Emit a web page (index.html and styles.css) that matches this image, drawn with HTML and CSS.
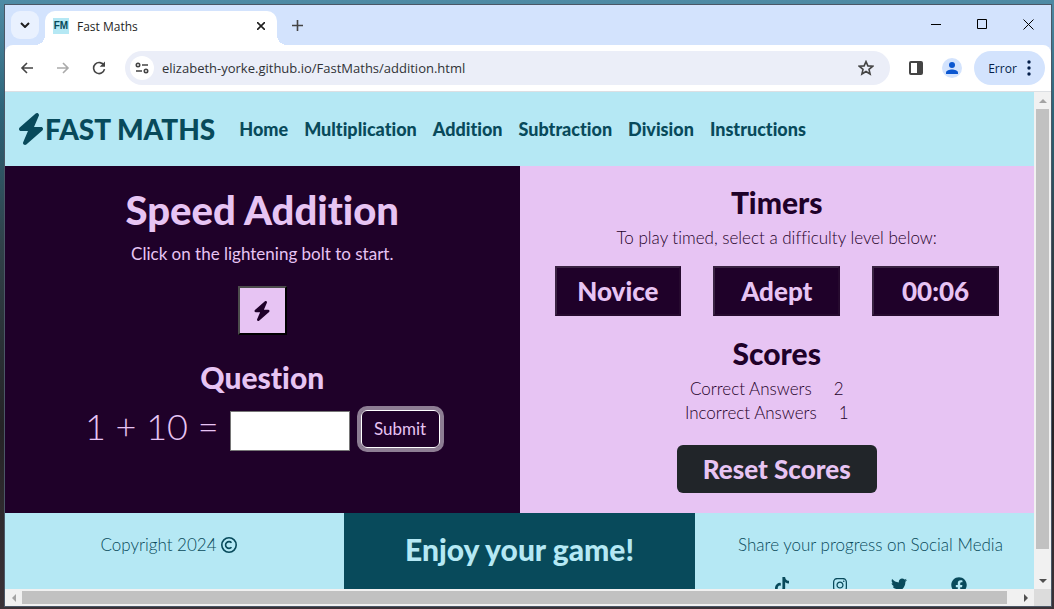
FILE: index.html
```html
<!DOCTYPE html>
<html lang="en">
<head>
<meta charset="utf-8">
<title>Fast Maths</title>
<link rel="stylesheet" href="styles.css">
</head>
<body>
<svg class="symbols">
  <symbol id="bolt" viewBox="0 0 448 512"><path d="M349.4 44.6c5.9-13.7 1.5-29.7-10.6-38.5s-28.6-8-39.9 1.8l-256 224c-10 8.8-13.6 22.9-8.9 35.3S50.7 288 64 288H175.5L98.6 467.4c-5.9 13.7-1.5 29.7 10.6 38.5s28.6 8 39.9-1.8l256-224c10-8.8 13.6-22.9 8.9-35.3s-16.6-20.7-30-20.7H272.5L349.4 44.6z"/></symbol>
</svg>
<div class="window">
  <div class="tabstrip">
    <button class="tab-search" aria-label="Search tabs"><svg width="10" height="6" viewBox="0 0 10 6"><path class="line thick" d="M1 1l4 4 4-4"/></svg></button>
    <div class="tab">
      <span class="favicon">FM</span>
      <span class="tab-title">Fast Maths</span>
      <button class="tab-close" aria-label="Close tab"><svg width="8" height="8" viewBox="0 0 8 8"><path class="line" d="M0 0l8 8M8 0L0 8"/></svg></button>
    </div>
    <button class="new-tab" aria-label="New tab"><svg width="11" height="11" viewBox="0 0 11 11"><path class="line" d="M5.500 0v11M0 5.500h11"/></svg></button>
    <div class="window-controls">
      <button aria-label="Minimise"><svg width="10" height="10" viewBox="0 0 10 10"><path class="hair" d="M0 5.500h10"/></svg></button>
      <button aria-label="Maximise"><svg width="10" height="10" viewBox="0 0 10 10"><path class="hair" d="M.5.5h9v9h-9z"/></svg></button>
      <button aria-label="Close"><svg width="11" height="11" viewBox="0 0 11 11"><path class="hair" d="M.5.5l10 10M10.500.5l-10 10"/></svg></button>
    </div>
  </div>

  <div class="toolbar">
    <div class="nav-buttons">
      <button aria-label="Back"><svg width="14" height="12" viewBox="0 0 14 12"><path class="line" d="M13 6H2M7 1L2 6l5 5"/></svg></button>
      <button class="faded" aria-label="Forward"><svg width="14" height="12" viewBox="0 0 14 12"><path class="line" d="M1 6h11M7 1l5 5-5 5"/></svg></button>
      <button aria-label="Reload"><svg width="14" height="14" viewBox="0 0 14 14"><path class="line" d="M12 4.500A5.500 5.500 0 1 0 12.500 8.200"/><path d="M13 .5v5.300H7.700z"/></svg></button>
    </div>
    <div class="omnibox">
      <button class="site-info" aria-label="Site information"><svg width="14" height="12" viewBox="0 0 14 12"><path class="line" d="M7 3h6M1 9h6"/><circle class="line" cx="3" cy="3" r="1.700"/><circle class="line" cx="11" cy="9" r="1.700"/></svg></button>
      <input class="url" type="text" aria-label="Address" value="elizabeth-yorke.github.io/FastMaths/addition.html">
      <button class="star" aria-label="Bookmark"><svg width="16" height="16" viewBox="0 0 16 16"><path class="line" d="M8 1.600l1.900 4.300 4.700.4-3.600 3.100 1.100 4.600L8 11.500 3.900 14 5 9.400 1.400 6.300l4.700-.4z"/></svg></button>
    </div>
    <div class="tools">
      <button aria-label="Side panel"><svg width="14" height="14" viewBox="0 0 14 14"><rect class="line thick" x="1" y="1" width="12" height="12" rx="1"/><path d="M8 1h5v12H8z"/></svg></button>
      <button class="profile" aria-label="Profile"><svg width="12" height="12" viewBox="0 0 12 12"><circle cx="6" cy="3" r="3"/><path d="M0 12v-1.500C0 8.500 3.500 7.500 6 7.500s6 1 6 3V12z"/></svg></button>
    </div>
    <button class="error">Error<svg width="4" height="16" viewBox="0 0 4 16"><circle cx="2" cy="2" r="1.700"/><circle cx="2" cy="8" r="1.700"/><circle cx="2" cy="14" r="1.700"/></svg></button>
  </div>

  <div class="viewport">
    <div class="page">
      <header class="site-header">
        <a class="brand" href="#"><svg class="brand-bolt"><use href="#bolt"/></svg>FAST MATHS</a>
        <nav class="site-nav">
          <a href="#">Home</a>
          <a href="#">Multiplication</a>
          <a href="#">Addition</a>
          <a href="#">Subtraction</a>
          <a href="#">Division</a>
          <a href="#">Instructions</a>
        </nav>
      </header>

      <main class="game">
        <section class="play">
          <h1>Speed Addition</h1>
          <p>Click on the lightening bolt to start.</p>
          <button class="start" aria-label="Start"><svg class="start-bolt"><use href="#bolt"/></svg></button>
          <h2>Question</h2>
          <form class="question">
            <label for="answer">1 + 10 =</label>
            <input id="answer" type="text">
            <button class="submit" type="button">Submit</button>
          </form>
        </section>
        <section class="side">
          <h2>Timers</h2>
          <p>To play timed, select a difficulty level below:</p>
          <div class="timers">
            <button>Novice</button>
            <button>Adept</button>
            <button>00:06</button>
          </div>
          <h2>Scores</h2>
          <div class="scores">
            <div class="score"><span>Correct Answers</span><span>2</span></div>
            <div class="score"><span>Incorrect Answers</span><span>1</span></div>
          </div>
          <button class="reset">Reset Scores</button>
        </section>
      </main>

      <footer class="site-footer">
        <div class="copyright">Copyright 2024 <svg width="16" height="16" viewBox="0 0 16 16"><circle class="line" cx="8" cy="8" r="7.200"/><path class="line" d="M10.500 5.700a3.400 3.400 0 1 0 0 4.600"/></svg></div>
        <div class="enjoy"><h2>Enjoy your game!</h2></div>
        <div class="social">
          <p>Share your progress on Social Media</p>
          <div class="social-links">
            <a href="#" aria-label="TikTok"><svg width="14" height="16" viewBox="0 0 448 512"><path d="M448 209.900a210.100 210.100 0 0 1-122.800-39.300V349.400A162.600 162.600 0 1 1 185 188.300V278.200a74.600 74.600 0 1 0 52.200 71.200V0l88 0a121.200 121.200 0 0 0 1.900 22.200h0A122.200 122.200 0 0 0 381 102.400a121.400 121.400 0 0 0 67 20.100z"/></svg></a>
            <a href="#" aria-label="Instagram"><svg width="14" height="16" viewBox="0 0 448 512"><path d="M224.100 141c-63.600 0-114.900 51.300-114.900 114.900s51.300 114.900 114.900 114.900S339 319.500 339 255.900 287.700 141 224.100 141zm0 189.600c-41.100 0-74.700-33.500-74.700-74.700s33.500-74.700 74.700-74.700 74.700 33.500 74.700 74.700-33.600 74.700-74.700 74.700zm146.400-194.300c0 14.900-12 26.800-26.800 26.800-14.900 0-26.800-12-26.800-26.800s12-26.800 26.800-26.800 26.800 12 26.800 26.800zm76.100 27.200c-1.700-35.900-9.900-67.700-36.200-93.900-26.200-26.200-58-34.400-93.900-36.200-37-2.100-147.900-2.100-184.900 0-35.800 1.700-67.600 9.900-93.900 36.100s-34.400 58-36.200 93.900c-2.100 37-2.100 147.900 0 184.900 1.700 35.900 9.900 67.700 36.200 93.900s58 34.400 93.900 36.200c37 2.100 147.900 2.100 184.900 0 35.900-1.700 67.700-9.900 93.900-36.200 26.200-26.200 34.400-58 36.200-93.900 2.100-37 2.100-147.800 0-184.800zM398.800 388c-7.800 19.600-22.900 34.700-42.600 42.600-29.500 11.700-99.500 9-132.100 9s-102.700 2.600-132.100-9c-19.600-7.800-34.700-22.900-42.600-42.600-11.700-29.500-9-99.500-9-132.100s-2.600-102.700 9-132.100c7.800-19.600 22.900-34.700 42.600-42.600 29.500-11.700 99.500-9 132.100-9s102.700-2.600 132.100 9c19.600 7.800 34.700 22.900 42.600 42.600 11.700 29.500 9 99.500 9 132.100s2.700 102.700-9 132.100z"/></svg></a>
            <a href="#" aria-label="Twitter"><svg width="16" height="16" viewBox="0 0 512 512"><path d="M459.370 151.716c.325 4.548.325 9.097.325 13.645 0 138.720-105.583 298.558-298.558 298.558-59.452 0-114.680-17.219-161.137-47.106 8.447.974 16.568 1.299 25.340 1.299 49.055 0 94.213-16.568 130.274-44.832-46.132-.975-84.792-31.188-98.112-72.772 6.498.974 12.995 1.624 19.818 1.624 9.421 0 18.843-1.300 27.614-3.573-48.081-9.747-84.143-51.980-84.143-102.985v-1.299c13.969 7.797 30.214 12.670 47.431 13.319-28.264-18.843-46.781-51.005-46.781-87.391 0-19.492 5.197-37.360 14.294-52.954 51.655 63.675 129.300 105.258 216.365 109.807-1.624-7.797-2.599-15.918-2.599-24.040 0-57.828 46.782-104.934 104.934-104.934 30.213 0 57.502 12.670 76.670 33.137 23.715-4.548 46.456-13.320 66.599-25.340-7.798 24.366-24.366 44.833-46.132 57.827 21.117-2.273 41.584-8.122 60.426-16.243-14.292 20.791-32.161 39.308-52.628 54.253z"/></svg></a>
            <a href="#" aria-label="Facebook"><svg width="16" height="16" viewBox="0 0 512 512"><path d="M504 256C504 119 393 8 256 8S8 119 8 256c0 123.780 90.690 226.380 209.250 245V327.690h-63V256h63v-54.640c0-62.150 37-96.480 93.670-96.480 27.140 0 55.520 4.840 55.520 4.840v61h-31.280c-30.800 0-40.410 19.120-40.410 38.730V256h68.780l-11 71.690h-57.780V501C413.310 482.380 504 379.780 504 256z"/></svg></a>
          </div>
        </div>
      </footer>
    </div>
    <div class="scroll vertical">
      <button class="dim" aria-label="Scroll up"><svg width="8" height="4" viewBox="0 0 8 4"><path d="M0 4l4-4 4 4z"/></svg></button>
      <div class="track"><div class="thumb"></div></div>
      <button aria-label="Scroll down"><svg width="8" height="4" viewBox="0 0 8 4"><path d="M0 0l4 4 4-4z"/></svg></button>
    </div>
    <div class="scroll horizontal">
      <button class="dim" aria-label="Scroll left"><svg width="4" height="8" viewBox="0 0 4 8"><path d="M4 0L0 4l4 4z"/></svg></button>
      <div class="track"><div class="thumb"></div></div>
      <button aria-label="Scroll right"><svg width="4" height="8" viewBox="0 0 4 8"><path d="M0 0l4 4-4 4z"/></svg></button>
    </div>
    <div class="corner"></div>
  </div>
</div>
</body>
</html>
```
FILE: styles.css
```css
:root {
  --sky: #b5e8f4;
  --teal: #084a5b;
  --plum: #1f0129;
  --lilac: #e7c4f3;
  --chrome: #d3e3fd;
}

* { box-sizing: border-box; }

body {
  margin: 0;
  height: 100vh;
  padding: 4px 2px 2px 4px;
  background: linear-gradient(#4f8ba5, #2d6478 18%, #304149 40%, #252326 70%, #3a3237);
  font-family: "Open Sans", sans-serif;
}

.symbols { display: none; }

h1, h2, p { margin: 0; }

button {
  display: flex;
  align-items: center;
  justify-content: center;
  padding: 0;
  border: 0;
  background: none;
  color: inherit;
  font: inherit;
}

a { color: inherit; text-decoration: none; }

svg { fill: currentColor; flex: none; }

.line { fill: none; stroke: currentColor; stroke-width: 1.6; }
.thick { stroke-width: 2; }
.hair { fill: none; stroke: #000; stroke-width: 1; }

/* Browser window */
.window {
  display: flex;
  flex-direction: column;
  height: 100%;
  border: 1px solid #4b5766;
  background: var(--chrome);
}

.tabstrip {
  display: flex;
  flex: none;
  height: 40px;
  padding-left: 6px;
  color: #1f1f1f;
}

.tab-search {
  width: 28px;
  height: 28px;
  margin: 6px 6px 0 0;
  border-radius: 9px;
  background: #e9f1fe;
}

.tab {
  position: relative;
  display: flex;
  align-items: center;
  width: 232px;
  margin-top: 6px;
  padding: 0 12px 4px 8px;
  border-radius: 10px 10px 0 0;
  background: #fff;
  font-size: 12px;
}

.tab::before,
.tab::after {
  content: "";
  position: absolute;
  bottom: 0;
  width: 10px;
  height: 10px;
}

.tab::before { right: 100%; background: radial-gradient(circle at 0 0, transparent 10px, #fff 10px); }
.tab::after { left: 100%; background: radial-gradient(circle at 100% 0, transparent 10px, #fff 10px); }

.favicon {
  width: 16px;
  height: 16px;
  background: var(--sky);
  color: var(--teal);
  font: bold 10px/16px "Liberation Sans", sans-serif;
  text-align: center;
}

.tab-title { flex: 1; padding-left: 8px; }

.new-tab { width: 40px; height: 40px; color: #444; }

.window-controls { display: flex; margin-left: auto; }
.window-controls button { width: 46px; height: 38px; }

.toolbar {
  display: flex;
  flex: none;
  align-items: center;
  height: 47px;
  padding: 0 6px 0 4px;
  border-bottom: 1px solid #dcdfe3;
  border-radius: 8px 8px 0 0;
  background: #fff;
  color: #444;
}

.nav-buttons { display: flex; }
.nav-buttons button { width: 36px; height: 34px; }
.nav-buttons .faded { color: #aaa; }

.omnibox {
  display: flex;
  flex: 1;
  align-items: center;
  height: 34px;
  margin-left: 8px;
  padding: 0 16px 0 5px;
  border-radius: 17px;
  background: #ebeef8;
}

.site-info {
  width: 24px;
  height: 24px;
  border-radius: 50%;
  background: #fff;
}

.url {
  flex: 1;
  min-width: 0;
  padding: 0 8px;
  border: 0;
  background: none;
  color: #303236;
  font: 13px "Open Sans", sans-serif;
}

.tools { display: flex; gap: 16px; margin: 0 12px 0 16px; }
.tools button { width: 20px; height: 20px; }
.tools .profile { border-radius: 50%; background: var(--chrome); color: #0b57d0; }

.error {
  gap: 10px;
  width: 71px;
  height: 34px;
  border-radius: 17px;
  background: var(--chrome);
  color: #041e49;
  font-size: 12px;
}

/* Viewport with its scroll bars */
.viewport {
  display: grid;
  flex: 1;
  grid-template: minmax(0, 1fr) 17px / minmax(0, 1fr) 17px;
  min-height: 0;
}

.scroll { display: flex; background: #f1f1f1; color: #505050; }
.scroll button { width: 17px; height: 17px; }
.scroll .dim { color: #a3a3a3; }
.track { display: flex; flex: 1; }
.thumb { background: #c1c1c1; }
.vertical { flex-direction: column; }
.vertical .track { flex-direction: column; padding: 0 2px; }
.vertical .thumb { height: 95%; }
.horizontal .track { padding: 2px 0; }
.horizontal .thumb { width: 99%; }
.corner { background: #dcdcdc; }

/* Site */
.page {
  overflow: hidden;
  background: var(--sky);
  color: var(--teal);
  font: 300 17px/24px Lato, sans-serif;
  font-variant-ligatures: none;
}

.site-header {
  display: flex;
  align-items: center;
  gap: 24px;
  height: 74px;
  padding: 0 12px;
}

.brand {
  display: flex;
  align-items: center;
  font-size: 28px;
  font-weight: 900;
  white-space: nowrap;
}

.brand-bolt { width: 28px; height: 32px; }

.site-nav {
  display: flex;
  gap: 16px;
  font-size: 18px;
  font-weight: 900;
}

.game {
  display: grid;
  grid-template-columns: 1fr 1fr;
}

.play, .side {
  display: flex;
  flex-direction: column;
  align-items: center;
  padding: 20px;
}

.play { background: var(--plum); color: var(--lilac); }
.side { background: var(--lilac); color: var(--plum); }

h1 { margin-bottom: 8px; font-size: 40px; font-weight: 900; line-height: 48px; }
h2 { margin-bottom: 8px; font-size: 30px; font-weight: 900; line-height: 32px; }

.play p { font-weight: 400; }

.start {
  width: 49px;
  height: 49px;
  margin: 20px 0 26px;
  border: 2px outset #000;
  border-color: #4c4c4c #000 #000 #4c4c4c;
  background: var(--lilac);
  color: var(--plum);
}

.start-bolt { width: 18px; height: 20px; }

.question { display: flex; align-items: center; }

.question label { font-size: 36px; line-height: 48px; }

.question input {
  width: 120px;
  height: 40px;
  margin: 10px 11px 0;
  border: 1px solid #767676;
  background: #fff;
  font: inherit;
}

.submit {
  width: 79px;
  height: 38px;
  margin-top: 6px;
  border: 1px solid #fff;
  border-radius: 6px;
  box-shadow: 0 0 0 4px #8d7d93;
  font-weight: 400;
}

.timers {
  display: grid;
  grid-template-columns: repeat(3, 1fr);
  gap: 32px;
  width: 100%;
  margin: 16px 0 21px;
  padding: 0 15px;
}

.timers button {
  height: 50px;
  border: 2px solid;
  border-color: #3a2342 #260a2e #260a2e #3a2342;
  background: var(--plum);
  color: var(--lilac);
  font-size: 26px;
  font-weight: 900;
}

.scores { padding-right: 20px; }
.score { display: flex; justify-content: center; gap: 22px; }

.reset {
  width: 200px;
  height: 48px;
  margin-top: 20px;
  border-radius: 6px;
  background: #212529;
  color: var(--lilac);
  font-size: 26px;
  font-weight: 900;
}

.site-footer {
  display: grid;
  grid-template-columns: 339fr 351fr 339fr;
}

.site-footer > div { padding: 20px 0; text-align: center; }

.site-footer .copyright {
  display: flex;
  align-items: flex-start;
  justify-content: center;
  gap: 4px;
  padding-right: 12px;
}

.copyright svg { margin-top: 4px; }

.site-footer .enjoy { background: var(--teal); color: var(--sky); }

.site-footer .social { padding-left: 12px; }

.social-links {
  display: flex;
  justify-content: center;
  gap: 44px;
  margin-top: 20px;
}

.social-links svg { display: block; }
```
